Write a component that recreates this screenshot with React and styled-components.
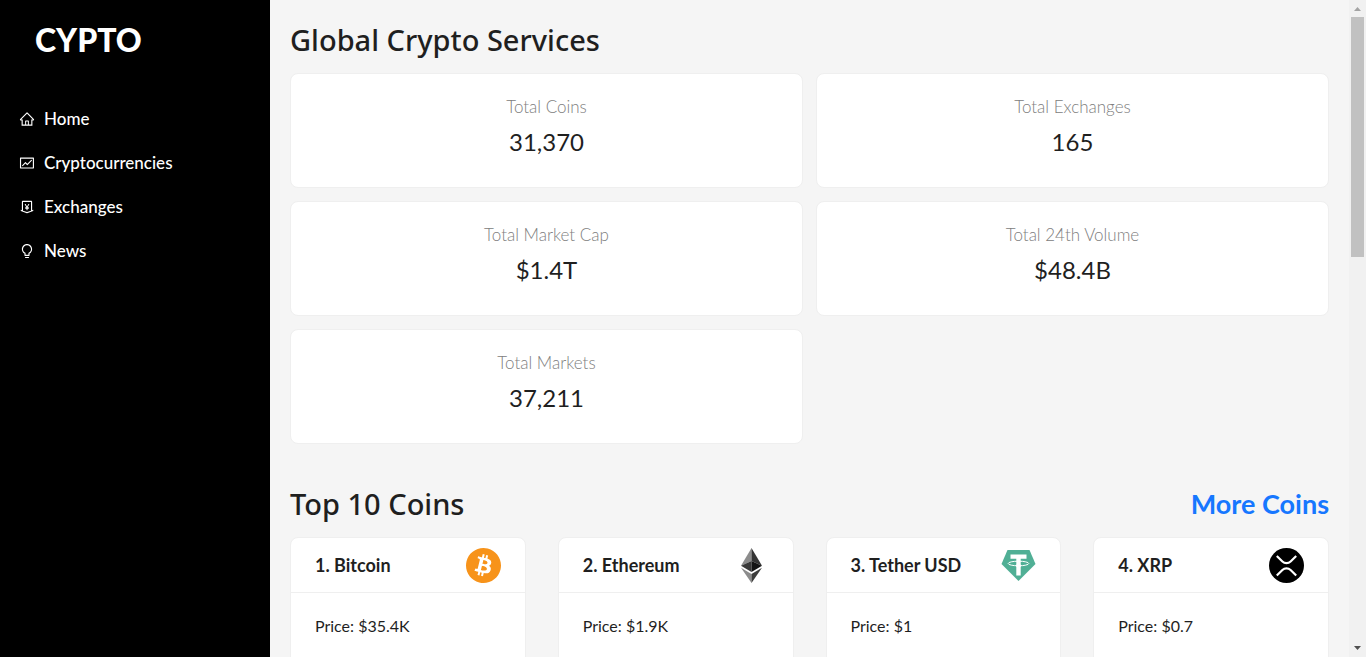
import React from "react";
import styled, { createGlobalStyle } from "styled-components";
import {
  AiOutlineHome,
  AiOutlineFund,
  AiOutlineMoneyCollect,
  AiOutlineBulb,
} from "react-icons/ai";
import { SiBitcoin } from "react-icons/si";

const GlobalStyle = createGlobalStyle`
  * { box-sizing: border-box; }
  body {
    margin: 0;
    background: #f5f5f5;
    color: #1f1f1f;
    font-family: Lato, "Liberation Sans", sans-serif;
    font-size: 16px;
    line-height: 22px;
  }
  h1, h2, h3, p, dl, dd, ul { margin: 0; padding: 0; }
`;

const Shell = styled.div`
  display: flex;
  height: 100vh;
  overflow: hidden;
`;

const Sidebar = styled.aside`
  flex: 0 0 270px;
  background: #000;
  color: #fff;
`;

const Logo = styled.a`
  display: block;
  padding: 20px 35px;
  font-size: 32px;
  line-height: 40px;
  font-weight: 900;
  color: #fff;
  text-decoration: none;
`;

const Menu = styled.ul`
  display: grid;
  gap: 4px;
  padding-top: 19px;
  list-style: none;
`;

const MenuLink = styled.a`
  display: flex;
  align-items: center;
  gap: 9px;
  height: 40px;
  padding: 0 19px;
  color: #fff;
  font-size: 17px;
  font-weight: 500;
  text-decoration: none;

  svg { width: 16px; height: 16px; }
`;

const Content = styled.main`
  flex: 1;
  min-width: 0;
  padding: 20px;
  overflow: hidden;
`;

const Title = styled.h2`
  font-family: "Noto Sans", "Open Sans", sans-serif;
  font-size: 29px;
  line-height: 40px;
  font-weight: 500;
`;

const Stats = styled.dl`
  display: grid;
  grid-template-columns: 1fr 1fr;
  gap: 13px;
  margin-top: 13px;
`;

const Stat = styled.div`
  height: 115px;
  padding: 22px 24px;
  border: 1px solid #efefef;
  border-radius: 8px;
  background: #fff;
  text-align: center;
`;

const StatLabel = styled.dt`
  color: #808080;
  font-size: 17px;
  font-weight: 300;
`;

const StatValue = styled.dd`
  margin-top: 4px;
  font-size: 24px;
  line-height: 40px;
`;

const SectionHead = styled.header`
  display: flex;
  align-items: center;
  justify-content: space-between;
  margin-top: 40px;
`;

const MoreLink = styled.a`
  color: #1677ff;
  font-size: 27px;
  line-height: 40px;
  font-weight: 700;
  text-decoration: none;
`;

const Coins = styled.div`
  display: grid;
  grid-template-columns: repeat(4, 1fr);
  gap: 32px;
  margin-top: 13px;
`;

const CoinCard = styled.article`
  min-height: 240px;
  border: 1px solid #efefef;
  border-radius: 8px;
  background: #fff;
`;

const CoinHead = styled.header`
  display: flex;
  align-items: center;
  justify-content: space-between;
  height: 55px;
  padding: 0 24px;
  border-bottom: 1px solid #efefef;

  svg { width: 35px; height: 35px; }
`;

const CoinName = styled.h3`
  font-size: 18px;
  line-height: 22px;
  font-weight: 700;
`;

const CoinBody = styled.div`
  padding: 22px 24px;
`;

const ScrollTrack = styled.div`
  display: flex;
  flex-direction: column;
  align-items: center;
  justify-content: space-between;
  flex: 0 0 17px;
  background: #f1f1f1;
`;

const ScrollThumb = styled.div`
  width: 13px;
  height: 240px;
  background: #c1c1c1;
`;

const ScrollTop = styled.div`
  svg { display: block; }
`;

const Arrow = ({ down }) => (
  <svg width="13" height="17" viewBox="0 0 13 17" aria-hidden="true">
    <path d={down ? "M3 6h7L6.500 10z" : "M3 11h7L6.500 7z"} fill={down ? "#505050" : "#a3a3a3"} />
  </svg>
);

const Ethereum = () => (
  <svg viewBox="0 0 35 35" aria-hidden="true">
    <path d="M17.500 0L7 17.800l10.500-4.900z" fill="#8c8c8c" />
    <path d="M17.500 0L28 17.800l-10.500-4.900z" fill="#343434" />
    <path d="M7 17.800l10.500-4.900V24z" fill="#393939" />
    <path d="M28 17.800l-10.500-4.900V24z" fill="#141414" />
    <path d="M7 19.800L17.500 26v9z" fill="#8c8c8c" />
    <path d="M28 19.800L17.500 26v9z" fill="#3c3c3b" />
  </svg>
);

const Tether = () => (
  <svg viewBox="0 0 35 35" aria-hidden="true">
    <path d="M6.500 2h22L34.500 16 17.500 33 .5 16z" fill="#50af95" />
    <path d="M9.500 6.500h16v4.200h-5.800v16.800h-4.400V10.700H9.500z" fill="#fff" />
    <ellipse cx="17.500" cy="15.500" rx="10.300" ry="2.300" fill="none" stroke="#fff" />
    <path d="M15.300 16.500h4.400v2.400h-4.400z" fill="#fff" />
  </svg>
);

const Xrp = () => (
  <svg viewBox="0 0 35 35" aria-hidden="true">
    <circle cx="17.500" cy="17.500" r="17.500" />
    <path
      d="M7.800 8l5.600 5.500a5.900 5.900 0 0 0 8.200 0L27.200 8M7.800 27.500l5.600-5.500a5.900 5.900 0 0 1 8.200 0l5.600 5.500"
      fill="none"
      stroke="#fff"
      strokeWidth="2.200"
    />
  </svg>
);

const menu = [
  ["Home", AiOutlineHome],
  ["Cryptocurrencies", AiOutlineFund],
  ["Exchanges", AiOutlineMoneyCollect],
  ["News", AiOutlineBulb],
];

const stats = [
  ["Total Coins", "31,370"],
  ["Total Exchanges", "165"],
  ["Total Market Cap", "$1.4T"],
  ["Total 24th Volume", "$48.4B"],
  ["Total Markets", "37,211"],
];

const coins = [
  ["Bitcoin", "$35.4K", <SiBitcoin color="#f7931a" />],
  ["Ethereum", "$1.9K", <Ethereum />],
  ["Tether USD", "$1", <Tether />],
  ["XRP", "$0.7", <Xrp />],
];

export default function App() {
  return (
    <>
      <GlobalStyle />
      <Shell>
        <Sidebar>
          <Logo href="#">CYPTO</Logo>
          <nav>
            <Menu>
              {menu.map(([label, Icon]) => (
                <li key={label}>
                  <MenuLink href={`#${label.toLowerCase()}`}>
                    <Icon />
                    {label}
                  </MenuLink>
                </li>
              ))}
            </Menu>
          </nav>
        </Sidebar>
        <Content>
          <Title>Global Crypto Services</Title>
          <Stats>
            {stats.map(([label, value]) => (
              <Stat key={label}>
                <StatLabel>{label}</StatLabel>
                <StatValue>{value}</StatValue>
              </Stat>
            ))}
          </Stats>
          <SectionHead>
            <Title>Top 10 Coins</Title>
            <MoreLink href="#cryptocurrencies">More Coins</MoreLink>
          </SectionHead>
          <Coins>
            {coins.map(([name, price, icon], i) => (
              <CoinCard key={name}>
                <CoinHead>
                  <CoinName>{`${i + 1}. ${name}`}</CoinName>
                  {icon}
                </CoinHead>
                <CoinBody>
                  <p>Price: {price}</p>
                </CoinBody>
              </CoinCard>
            ))}
          </Coins>
        </Content>
        <ScrollTrack aria-hidden="true">
          <ScrollTop>
            <Arrow />
            <ScrollThumb />
          </ScrollTop>
          <Arrow down />
        </ScrollTrack>
      </Shell>
    </>
  );
}
